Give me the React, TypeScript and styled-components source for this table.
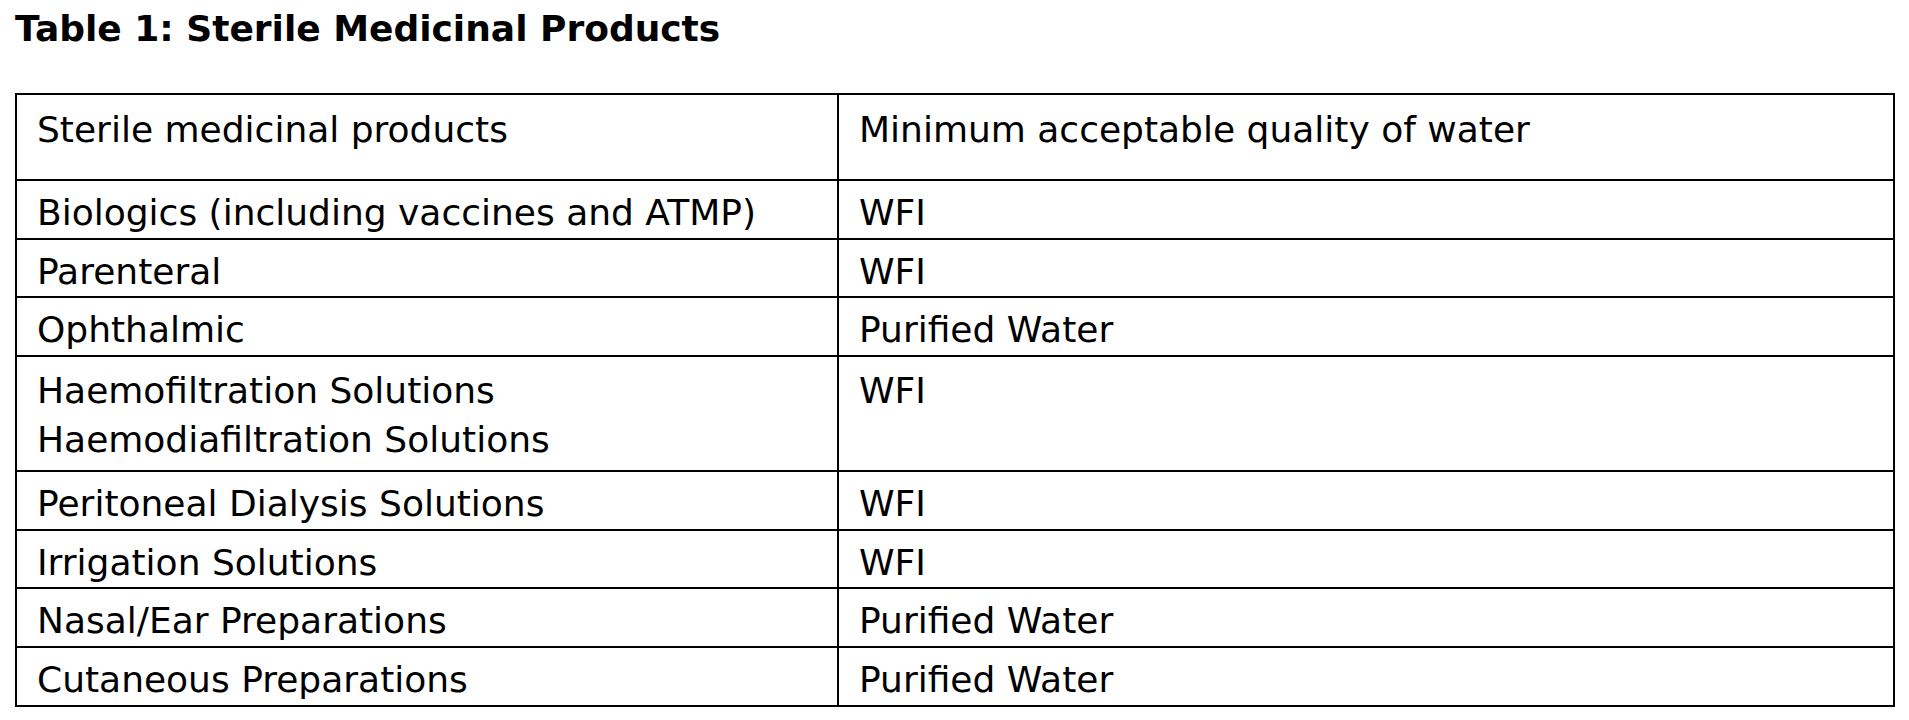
import styled, { createGlobalStyle } from "styled-components";

const GlobalStyle = createGlobalStyle`
  body {
    margin: 0;
    background: #fff;
    color: #000;
    font-family: "DejaVu Sans", Verdana, sans-serif;
  }
`;

type Row = { product: string[]; water: string };

const rows: Row[] = [
  { product: ["Biologics (including vaccines and ATMP)"], water: "WFI" },
  { product: ["Parenteral"], water: "WFI" },
  { product: ["Ophthalmic"], water: "Purified Water" },
  {
    product: ["Haemofiltration Solutions", "Haemodiafiltration Solutions"],
    water: "WFI",
  },
  { product: ["Peritoneal Dialysis Solutions"], water: "WFI" },
  { product: ["Irrigation Solutions"], water: "WFI" },
  { product: ["Nasal/Ear Preparations"], water: "Purified Water" },
  { product: ["Cutaneous Preparations"], water: "Purified Water" },
];

const Page = styled.div`
  padding: 9px 0 0 15px;
`;

const Title = styled.h1`
  margin: 0 0 44px;
  font-size: 36px;
  line-height: 40px;
  font-weight: bold;
`;

const Table = styled.table`
  width: 1880px;
  table-layout: fixed;
  border-collapse: collapse;
  font-size: 36px;
  line-height: 49px;
`;

const Cell = styled.td<{ $head?: boolean; $multi?: boolean }>`
  border: 2px solid #000;
  vertical-align: top;
  padding: ${(p) =>
    p.$head ? "10.3px 20px 24.7px" : p.$multi ? "8.6px 20px 6.4px" : "7px 20px 0.7px"};
`;

const Line = styled.div`
  white-space: nowrap;
`;

export default function App() {
  return (
    <>
      <GlobalStyle />
      <Page>
        <Title>Table 1: Sterile Medicinal Products</Title>
        <Table>
          <colgroup>
            <col style={{ width: 822 }} />
            <col />
          </colgroup>
          <tbody>
            <tr>
              <Cell $head>Sterile medicinal products</Cell>
              <Cell $head>Minimum acceptable quality of water</Cell>
            </tr>
            {rows.map((r) => {
              const multi = r.product.length > 1;
              return (
                <tr key={r.product[0]}>
                  <Cell $multi={multi}>
                    {r.product.map((l) => (
                      <Line key={l}>{l}</Line>
                    ))}
                  </Cell>
                  <Cell $multi={multi}>{r.water}</Cell>
                </tr>
              );
            })}
          </tbody>
        </Table>
      </Page>
    </>
  );
}
